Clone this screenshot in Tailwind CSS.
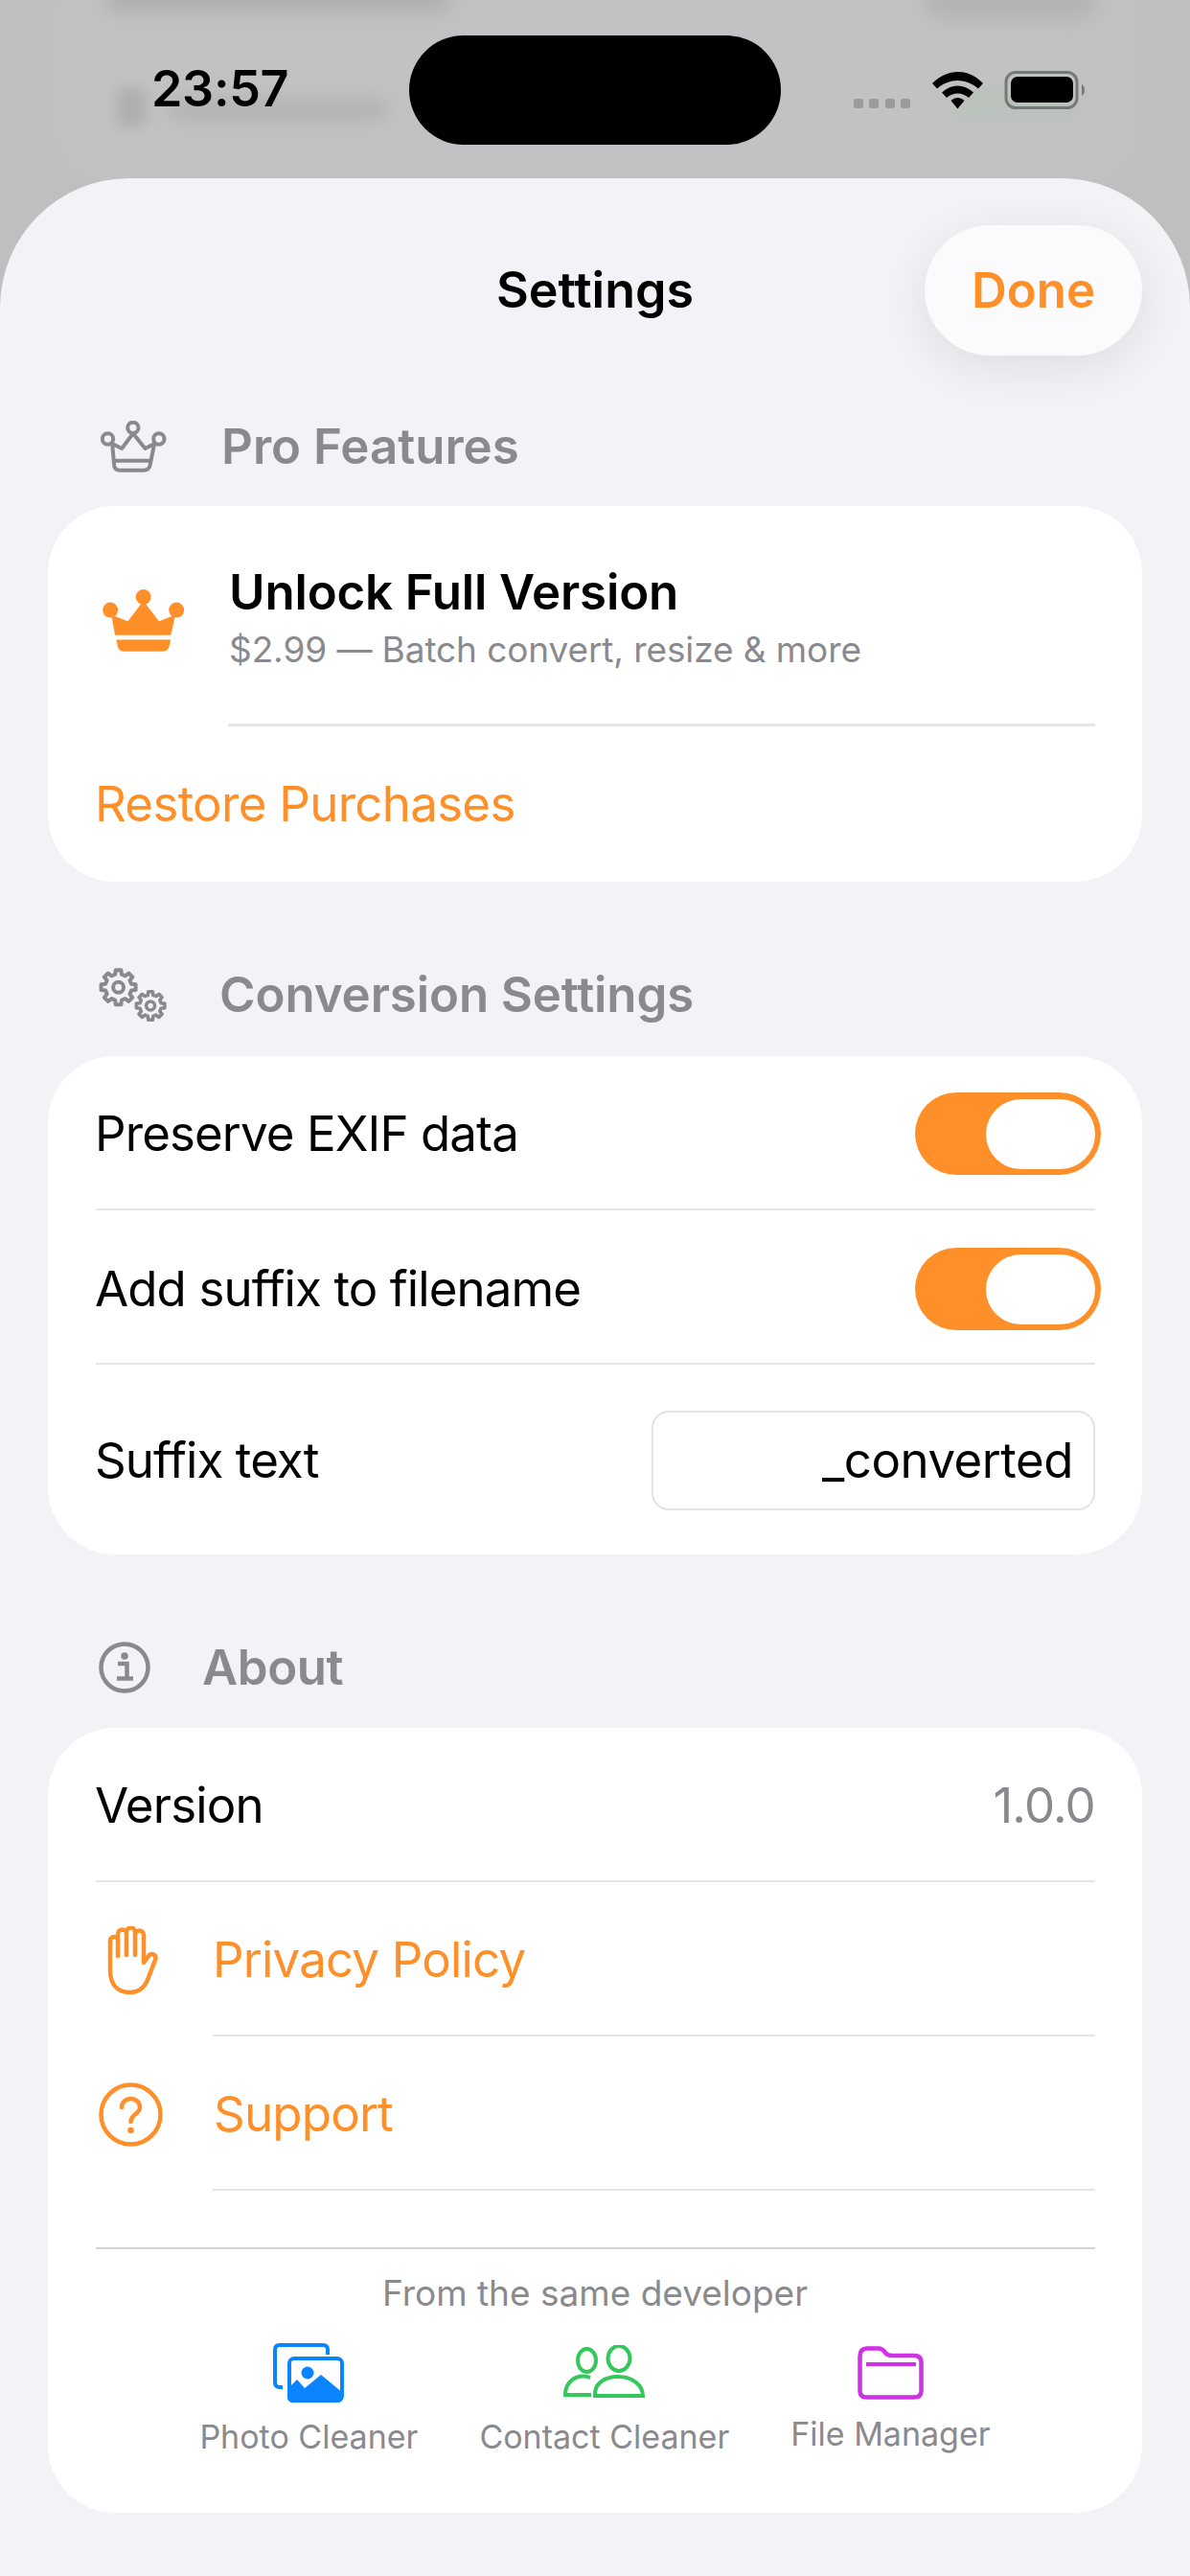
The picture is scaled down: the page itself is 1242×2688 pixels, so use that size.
<!DOCTYPE html>
<html>
<head>
<meta charset="utf-8">
<script src="https://cdn.jsdelivr.net/npm/@tailwindcss/browser@4"></script>
</head>
<body class="[font-family:Inter,sans-serif] bg-[#bfbfc1] text-black w-[1242px] h-[2688px] overflow-hidden relative">

<!-- blurred backdrop -->
<div class="absolute left-[55px] top-[-40px] w-[1135px] h-[230px] bg-white/5 rounded-[60px] blur-[6px]"></div>
<div class="absolute left-[110px] top-[-14px] w-[360px] h-[26px] bg-[#adadaf] rounded-full blur-[10px]"></div>
<div class="absolute left-[965px] top-[-20px] w-[180px] h-[40px] bg-[#b3b3b5] rounded-[20px] blur-[10px]"></div>
<div class="absolute left-[122px] top-[92px] w-[30px] h-[40px] bg-[#aeaeb0] rounded-md blur-[7px]"></div>
<div class="absolute left-[175px] top-[102px] w-[230px] h-[24px] bg-[#b3b3b5] rounded-full blur-[9px]"></div>
<div class="absolute left-[990px] top-[92px] w-[135px] h-[34px] bg-[#bac2ba] rounded-full blur-[10px]"></div>

<!-- status bar -->
<div class="absolute left-[158px] top-[63px] text-[52px] leading-[60px] font-semibold tracking-[-0.3px]">23:57</div>
<div class="absolute left-[427px] top-[37px] w-[388px] h-[114px] bg-black rounded-[57px]"></div>
<svg class="absolute left-[891px] top-[74px]" width="245" height="40" viewBox="0 0 245 40">
  <g fill="#9b9b9d"><rect x="0" y="29" width="10" height="10" rx="2.5"/><rect x="16" y="29" width="10" height="10" rx="2.5"/><rect x="33" y="29" width="10" height="10" rx="2.5"/><rect x="49" y="29" width="10" height="10" rx="2.5"/></g>
  <g fill="#000">
    <path d="M82 13 C98 -3 120 -3 135 13 L130 18.500 C117 7 100 7 87 18.500 Z"/>
    <path d="M92 22.500 C102 13 115 13 125 22.500 L120 28 C113 22 104 22 97 28 Z"/>
    <path d="M101.500 31 C106 27 111 27 115.500 31 L108.500 39.500 Z"/>
    <rect x="164" y="6" width="65" height="27" rx="7"/>
  </g>
  <rect x="159" y="1.500" width="74" height="37" rx="10" fill="none" stroke="#77787a" stroke-width="3"/>
  <path d="M238 14 C242 16 242 24 238 26 Z" fill="#77787a"/>
</svg>

<!-- sheet -->
<main class="absolute left-0 top-[186px] w-[1242px] h-[2502px] bg-[#f2f2f7] rounded-t-[135px] px-[50px] pt-[49px]">

  <header class="grid grid-cols-[1fr_auto_1fr] items-center h-[136px]">
    <div></div>
    <h1 class="text-[52px] leading-[60px] font-semibold">Settings</h1>
    <div class="justify-self-end w-[227px] h-[136px] rounded-[68px] bg-[#fbfbfe] shadow-[0_12px_50px_rgba(0,0,0,0.09)] flex items-center justify-center text-[51px] font-semibold text-[#ff8f28]">Done</div>
  </header>

  <!-- Pro Features -->
  <div class="mt-[55px] mb-[22px] h-[80px] flex items-center text-[#8a8a8e]">
    <svg class="ml-[53px] w-[72px] h-[55px]" viewBox="190 110 215 165" fill="none" stroke="#8a8a8e" stroke-width="12" stroke-linejoin="round">
      <circle cx="218" cy="167" r="17"/><circle cx="297" cy="132" r="17"/><circle cx="378" cy="167" r="17"/>
      <path d="M232 182 L262 197 L297 150 L335 197 L364 182 L350 250 Q346 265 330 265 L256 265 Q240 265 238 250 Z"/>
      <path d="M240 235 H355"/>
    </svg>
    <span class="ml-[56px] text-[51px] leading-[60px] font-semibold">Pro Features</span>
  </div>
  <section class="bg-white rounded-[70px] h-[392px]">
    <div class="h-[227px] pl-[50px] pt-[12px] flex items-center">
      <svg class="w-[100px] h-[73px]" viewBox="180 620 300 220" fill="#ff8f28">
        <circle cx="225" cy="697" r="24"/><circle cx="329" cy="656" r="24"/><circle cx="433" cy="697" r="24"/>
        <path d="M228 712 L280 732 L329 668 L378 732 L430 712 L415 776 H240 Z"/>
        <path d="M244 790 H415 L410 812 Q406 827 388 827 H270 Q252 827 248 812 Z"/>
      </svg>
      <div class="ml-[39px]">
        <div class="text-[51px] leading-[60px] font-semibold tracking-[-0.15px]">Unlock Full Version</div>
        <div class="text-[37px] leading-[60px] text-[#8a8a8e] tracking-[-0.1px]">$2.99 — Batch convert, resize &amp; more</div>
      </div>
    </div>
    <div class="ml-[188px] mr-[49px] h-[3px] bg-[#e6e6e8]"></div>
    <div class="h-[162px] pl-[49px] flex items-center text-[51px] text-[#ff8f28] tracking-[-0.7px]">Restore Purchases</div>
  </section>

  <!-- Conversion Settings -->
  <div class="mt-[78px] mb-[24px] h-[80px] flex items-center text-[#8a8a8e]">
    <svg class="ml-[50px] w-[77px] h-[63px]" viewBox="180 80 230 190" fill="none" stroke="#8a8a8e" stroke-linejoin="round">
      <g transform="translate(250 150) scale(1.1)" stroke-width="11">
        <path d="M-9.2 -36.900 L-7.800 -49.400 L7.800 -49.400 L9.200 -36.900 L19.600 -32.600 L29.400 -40.400 L40.400 -29.400 L32.600 -19.600 L36.900 -9.200 L49.400 -7.800 L49.400 7.800 L36.900 9.200 L32.600 19.600 L40.400 29.400 L29.400 40.400 L19.600 32.600 L9.200 36.900 L7.800 49.400 L-7.800 49.400 L-9.200 36.900 L-19.600 32.600 L-29.400 40.400 L-40.400 29.400 L-32.600 19.600 L-36.900 9.200 L-49.400 7.800 L-49.400 -7.800 L-36.900 -9.200 L-32.600 -19.600 L-40.400 -29.400 L-29.400 -40.400 L-19.600 -32.600 Z"/>
        <circle r="15"/>
      </g>
      <g transform="translate(351 208) scale(0.9)" stroke-width="12">
        <path d="M-9.2 -36.900 L-7.800 -49.400 L7.800 -49.400 L9.200 -36.900 L19.600 -32.600 L29.400 -40.400 L40.400 -29.400 L32.600 -19.600 L36.900 -9.200 L49.400 -7.800 L49.400 7.800 L36.900 9.200 L32.600 19.600 L40.400 29.400 L29.400 40.400 L19.600 32.600 L9.200 36.900 L7.800 49.400 L-7.800 49.400 L-9.200 36.900 L-19.600 32.600 L-29.400 40.400 L-40.400 29.400 L-32.600 19.600 L-36.900 9.200 L-49.400 7.800 L-49.400 -7.800 L-36.900 -9.200 L-32.600 -19.600 L-40.400 -29.400 L-29.400 -40.400 L-19.600 -32.600 Z"/>
        <circle r="15"/>
      </g>
    </svg>
    <span class="ml-[52px] text-[51px] leading-[60px] font-semibold tracking-[-0.1px]">Conversion Settings</span>
  </div>
  <section class="bg-white rounded-[70px] h-[520px] text-[51px] tracking-[-0.9px]">
    <div class="h-[159px] pl-[49px] pr-[50px] pt-[3px] flex items-center justify-between">
      <span>Preserve EXIF data</span>
      <div class="w-[194px] h-[86px] mr-[-7px] rounded-full bg-[#ff8f28] flex items-center justify-end pr-[6px]"><div class="w-[114px] h-[73px] rounded-full bg-white"></div></div>
    </div>
    <div class="ml-[50px] mr-[49px] h-[2px] bg-[#e6e6e8]"></div>
    <div class="h-[159px] pl-[49px] pr-[50px] pt-[5px] flex items-center justify-between">
      <span>Add suffix to filename</span>
      <div class="w-[194px] h-[86px] mr-[-7px] rounded-full bg-[#ff8f28] flex items-center justify-end pr-[6px]"><div class="w-[114px] h-[73px] rounded-full bg-white"></div></div>
    </div>
    <div class="ml-[50px] mr-[49px] h-[2px] bg-[#e6e6e8]"></div>
    <div class="h-[198px] pl-[49px] pr-[49px] pt-[2px] flex items-center justify-between">
      <span>Suffix text</span>
      <div class="w-[463px] h-[104px] rounded-[18px] border-2 border-[#e4e4e6] flex items-center justify-end pr-[21px] tracking-[-0.5px]">_converted</div>
    </div>
  </section>

  <!-- About -->
  <div class="mt-[78px] mb-[23px] h-[80px] flex items-center text-[#8a8a8e]">
    <svg class="ml-[53px] w-[54px] h-[54px]" viewBox="0 0 54 54" fill="none">
      <circle cx="27" cy="27" r="24.500" stroke="#8a8a8e" stroke-width="4.500"/>
      <circle cx="27" cy="15" r="3.800" fill="#8a8a8e"/>
      <path d="M20 23 H29.500 V38 M19 38.500 H36" stroke="#8a8a8e" stroke-width="4.500"/>
    </svg>
    <span class="ml-[54px] text-[51px] leading-[60px] font-semibold tracking-[-0.4px]">About</span>
  </div>
  <section class="bg-white rounded-[70px] h-[819px] text-[51px] tracking-[-0.8px]">
    <div class="h-[159px] pl-[49px] pr-[49px] pt-[3px] flex items-center justify-between">
      <span>Version</span><span class="text-[#8a8a8e]">1.0.0</span>
    </div>
    <div class="ml-[50px] mr-[49px] h-[2px] bg-[#e6e6e8]"></div>
    <div class="h-[159px] pl-[62px] pt-[3px] flex items-center text-[#ff8f28]">
      <svg class="w-[53px] h-[71px]" viewBox="0 0 53 71" fill="none" stroke="#ff8f28" stroke-width="4.500" stroke-linecap="round" stroke-linejoin="round">
        <path d="M3 46 V15 a4 4 0 0 1 8 0 V31 M11 15 V8 a4.500 4.500 0 0 1 9 0 V30 M20 6 a4.500 4.500 0 0 1 9 0 V30 M29 9 a4.500 4.500 0 0 1 9 0 V38 L43 31 a4 4 0 0 1 7 4 L42 56 C38 66 30 69 24 69 C10 69 3 60 3 46"/>
      </svg>
      <span class="ml-[57px]">Privacy Policy</span>
    </div>
    <div class="ml-[172px] mr-[49px] h-[2px] bg-[#e6e6e8]"></div>
    <div class="h-[159px] pl-[53px] pt-[3px] flex items-center text-[#ff8f28]">
      <svg class="w-[67px] h-[67px]" viewBox="0 0 67 67" fill="none">
        <circle cx="33.500" cy="33.500" r="31" stroke="#ff8f28" stroke-width="4.500"/>
        <path d="M24 26 C24 14 43 14 43 26 C43 33 33.500 33 33.500 41" stroke="#ff8f28" stroke-width="4.500" stroke-linecap="round"/>
        <circle cx="33.500" cy="50" r="3.300" fill="#ff8f28"/>
      </svg>
      <span class="ml-[53px]">Support</span>
    </div>
    <div class="ml-[172px] mr-[49px] h-[2px] bg-[#e6e6e8]"></div>
    <div class="mt-[59px] ml-[50px] mr-[49px] h-[2px] bg-[#d4d4d6]"></div>
    <div class="mt-[16px] h-[60px] flex items-center justify-center text-[37px] tracking-[0] text-[#8a8a8e]">From the same developer</div>
    <div class="mt-[22px] flex justify-center items-start gap-[64px] text-[34px] leading-[44px] tracking-[0] text-[#8a8a8e]">
      <div class="flex flex-col items-center">
        <svg class="w-[74px] h-[62px] mb-[14px]" viewBox="0 0 74 62" fill="none">
          <path d="M10 46 H7 Q2 46 2 41 V7 Q2 2 7 2 H52 Q57 2 57 7 V12" stroke="#0a84ff" stroke-width="4"/>
          <rect x="17" y="16" width="55" height="44" rx="5" stroke="#0a84ff" stroke-width="4"/>
          <circle cx="36" cy="31" r="6.500" fill="#0a84ff"/>
          <path d="M16 47 L25 38 L33 47 L50 33 L73 52 V56 Q73 62 67 62 H21 Q15 62 15 56 Z" fill="#0a84ff"/>
        </svg>
        <span class="h-[44px]">Photo Cleaner</span>
      </div>
      <div class="flex flex-col items-center">
        <svg class="mt-[2px] w-[85px] h-[56px] mb-[18px]" viewBox="0 0 85 56" fill="none" stroke="#34c759" stroke-width="4">
          <ellipse cx="24.500" cy="16" rx="9.500" ry="12"/>
          <ellipse cx="58" cy="14" rx="11.500" ry="13"/>
          <path d="M28 34 C14 29 2 38 2 52 H29"/>
          <path d="M33 53 C32 40 43 33 57 33 C72 33 83 42 83 53 Z"/>
        </svg>
        <span class="h-[44px]">Contact Cleaner</span>
      </div>
      <div class="flex flex-col items-center">
        <svg class="mt-[3px] w-[69px] h-[56px] mb-[14px]" viewBox="0 0 69 56" fill="none" stroke="#d030e6" stroke-width="4.500">
          <path d="M2.500 11 Q2.500 2.500 10 2.500 H22 Q26 2.500 29 7 Q31 10 36 10 H59 Q66.500 10 66.500 17 V47 Q66.500 53.500 59 53.500 H10 Q2.500 53.500 2.500 47 Z"/>
          <path d="M9 19 H61" stroke-width="4"/>
        </svg>
        <span class="h-[44px]">File Manager</span>
      </div>
    </div>
  </section>
</main>
</body>
</html>
